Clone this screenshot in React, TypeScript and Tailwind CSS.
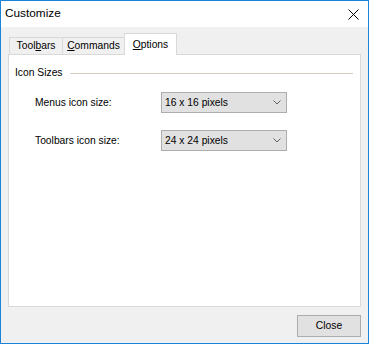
import { ReactNode } from 'react'

const FONT = { fontFamily: '"Liberation Sans", Arial, sans-serif' }

function Tab({
  children,
  selected,
  className,
}: {
  children: ReactNode
  selected?: boolean
  className?: string
}) {
  if (selected) {
    return (
      <div
        className={`relative z-10 -mb-px flex h-[22px] items-start justify-center border border-b-0 border-[#d9d9d9] bg-white pt-[3px] ${className ?? ''}`}
      >
        {children}
      </div>
    )
  }
  return (
    <div
      className={`flex h-[17px] items-center justify-center border-t border-r border-[#d9d9d9] bg-[#f0f0f0] ${className ?? ''}`}
    >
      {children}
    </div>
  )
}

function Select({ value }: { value: string }) {
  return (
    <div className="flex h-[21px] w-[126px] items-center justify-between border border-[#adadad] bg-[#e1e1e1] pl-[3px] pr-[5px]">
      <span>{value}</span>
      <svg width="8" height="5" viewBox="0 0 8 5">
        <path d="M0.5 0.5 L4 4 L7.5 0.5" fill="none" stroke="#606060" strokeWidth="1" />
      </svg>
    </div>
  )
}

export default function App() {
  return (
    <div
      style={FONT}
      className="flex h-[344px] w-[369px] flex-col border border-[#1883d7] bg-[#f0f0f0] text-[10.3px] text-black"
    >
      {/* title bar */}
      <div className="flex h-[26px] items-center justify-between bg-white pl-[4px] pr-[9px]">
        <span className="text-[11.8px]">Customize</span>
        <svg width="11" height="11" viewBox="0 0 11 11">
          <path d="M0.5 0.5 L10.5 10.5 M10.5 0.5 L0.5 10.5" stroke="#000" strokeWidth="1" />
        </svg>
      </div>

      <div className="flex flex-1 flex-col px-[7px] pt-[6px] pb-[6px]">
        {/* tabs */}
        <div className="flex h-[21px] items-end">
          <Tab className="ml-[1px] w-[54px] border-l">
            <span>
              Tool<u>b</u>ars
            </span>
          </Tab>
          <Tab className="w-[62px]">
            <span>
              <u>C</u>ommands
            </span>
          </Tab>
          <Tab selected className="-ml-px w-[53px]">
            <span>
              <u>O</u>ptions
            </span>
          </Tab>
        </div>

        {/* page */}
        <div className="flex h-[253px] flex-col border border-[#d9d9d9] bg-white px-[6px] pt-[12px]">
          <div className="flex h-[12px] items-center">
            <span>Icon Sizes</span>
            <div className="ml-[7px] mr-[1px] h-px flex-1 bg-[#d3cfba]" />
          </div>

          <div className="ml-[20px] mt-[13px] grid grid-cols-[126px_126px] items-center gap-y-[17px]">
            <span>Menus icon size:</span>
            <Select value="16 x 16 pixels" />
            <span>Toolbars icon size:</span>
            <Select value="24 x 24 pixels" />
          </div>
        </div>

        {/* footer */}
        <div className="mt-[8px] flex justify-end">
          <button className="flex h-[22px] w-[64px] items-center justify-center border border-[#adadad] bg-[#e1e1e1]">
            Close
          </button>
        </div>
      </div>
    </div>
  )
}
